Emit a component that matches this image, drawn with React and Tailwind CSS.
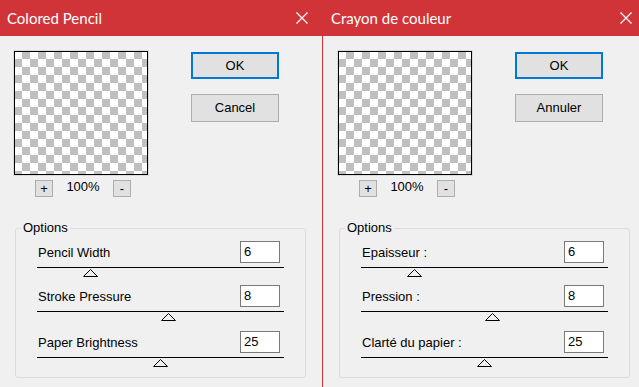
import React from "react";

const SANS = "font-['Liberation_Sans',Arial,sans-serif]";

function CloseIcon() {
  return (
    <svg width="12" height="12" viewBox="0 0 12 12" className="block">
      <path d="M0.5 0.5 L11.5 11.5 M11.5 0.5 L0.5 11.5" stroke="#fff" strokeWidth="1.2" fill="none" />
    </svg>
  );
}

function Thumb({ cls }) {
  return (
    <svg width="15" height="8" viewBox="0 0 15 8" className={"block mt-[1px] " + cls}>
      <polygon points="0.5,7.5 7.5,0.5 14.5,7.5" stroke="#000" strokeWidth="1" fill="none" />
    </svg>
  );
}

function Row({ label, value, thumbCls, rowCls }) {
  return (
    <div className={"flex flex-col w-[247px] " + rowCls}>
      <div className="flex items-center h-[22px]">
        <span className="ml-[1px] mt-[1px] text-[13px] leading-[16px] text-black">{label}</span>
        <div className="ml-auto mr-[4px] w-[40px] h-[22px] border border-[#7a7a7a] bg-white pl-[3px] text-[13px] leading-[20px] text-black">
          {value}
        </div>
      </div>
      <div className="mt-[4px] h-[1px] bg-black" />
      <Thumb cls={thumbCls} />
    </div>
  );
}

function Dialog({ title, cancel, labels, shifted }) {
  return (
    <div className={"flex flex-col h-[387px] w-[322px] shrink-0 " + SANS}>
      <div
        className={
          "flex items-center h-[36px] bg-[#d13438] shrink-0 " +
          (shifted ? "pl-[8px] pr-[13px]" : "pl-[7px] pr-[14px]")
        }
      >
        <span className="font-['Lato',sans-serif] text-[15px] leading-[20px] text-white">{title}</span>
        <span className="ml-auto">
          <CloseIcon />
        </span>
      </div>
      <div className={"flex-1 bg-[#f0f0f0] pt-[14px] " + (shifted ? "pl-[14px]" : "pl-[13px]")}>
        <div className="flex">
          <div className="flex flex-col">
            <div className="w-[136px] h-[126px] border border-[#dadada]">
              <div className="w-[134px] h-[124px] border border-black bg-[image:conic-gradient(#c0c0c0_25%,#fff_0_50%,#c0c0c0_0_75%,#fff_0)] bg-[length:16px_16px] bg-[position:-1px_-1px]" />
            </div>
            <div className="flex items-center mt-[4px] ml-[22px] h-[17px]">
              <div className="w-[18px] h-[17px] border border-[#adadad] bg-[#e1e1e1] flex items-center justify-center text-[13px] leading-[13px] text-black">+</div>
              <div className="w-[60px] text-center text-[13px] leading-[16px] text-black -mt-[4px]">100%</div>
              <div className="w-[18px] h-[17px] border border-[#adadad] bg-[#e1e1e1] flex items-center justify-center text-[13px] leading-[13px] text-black">-</div>
            </div>
          </div>
          <div className="flex flex-col ml-[42px] mt-[2px]">
            <div className="w-[88px] h-[27px] border-2 border-[#0078d7] bg-[#e1e1e1] flex items-center justify-center text-[13px] leading-[16px] text-black">
              OK
            </div>
            <div className="mt-[15px] w-[88px] h-[28px] border border-[#adadad] bg-[#e1e1e1] flex items-center justify-center text-[13px] leading-[16px] text-black">
              {cancel}
            </div>
          </div>
        </div>
        <fieldset className="mt-[23px] ml-[2px] w-[291px] border border-[#dcdcdc] rounded-[3px] pt-[5px] pb-[10px]">
          <legend className="ml-[5px] px-[2px] text-[13px] leading-[16px] text-black">Options</legend>
          <div className="pl-[21px]">
            <Row label={labels[0]} value="6" thumbCls="ml-[46px]" rowCls="" />
            <Row label={labels[1]} value="8" thumbCls="ml-[124px]" rowCls="mt-[8px]" />
            <Row label={labels[2]} value="25" thumbCls="ml-[116px]" rowCls="mt-[10px]" />
          </div>
        </fieldset>
      </div>
    </div>
  );
}

export default function App() {
  return (
    <div className="flex w-[639px] h-[387px] overflow-hidden bg-[#f0f0f0]">
      <div className="w-[322px] shrink-0 overflow-hidden">
        <Dialog
          title="Colored Pencil"
          cancel="Cancel"
          labels={["Pencil Width", "Stroke Pressure", "Paper Brightness"]}
          shifted={false}
        />
      </div>
      <div className="w-[317px] shrink-0 overflow-hidden border-l border-[#d13438]">
        <Dialog
          title="Crayon de couleur"
          cancel="Annuler"
          labels={["Epaisseur :", "Pression :", "Clarté du papier :"]}
          shifted={true}
        />
      </div>
    </div>
  );
}
